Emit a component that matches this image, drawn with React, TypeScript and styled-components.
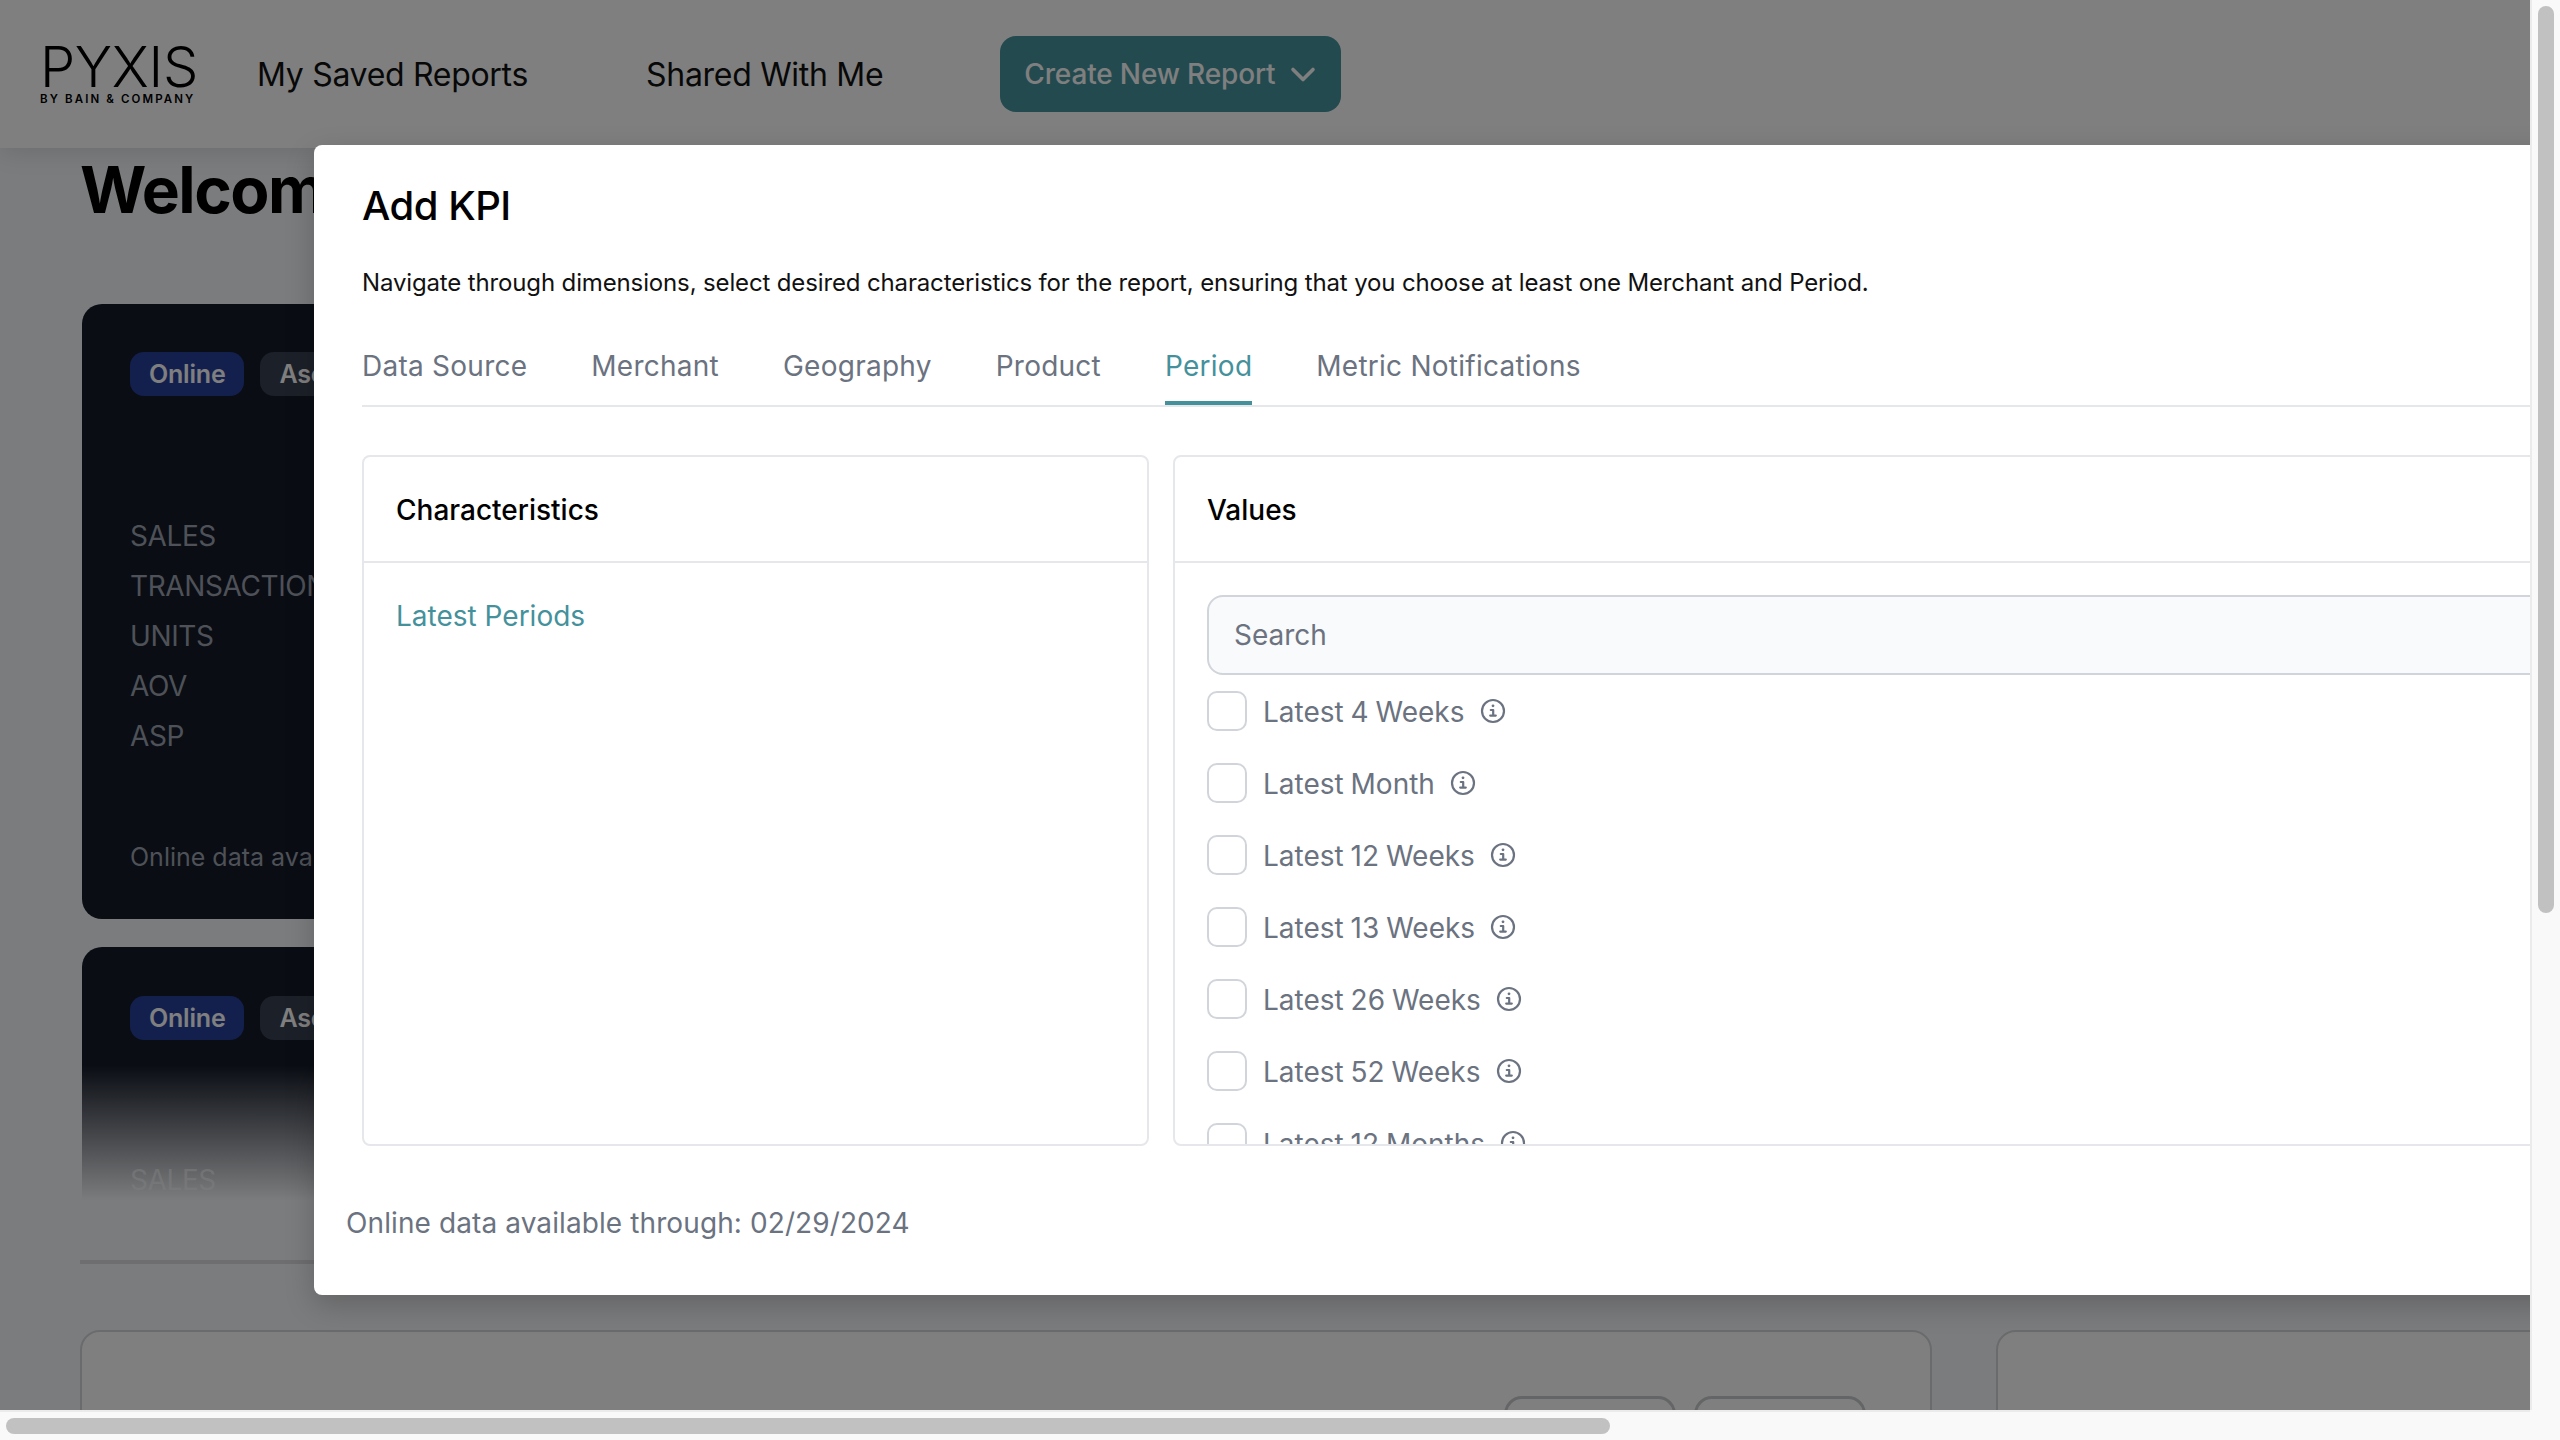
import React from "react";
import styled, { createGlobalStyle } from "styled-components";

const FONT = `Inter, "Noto Sans", sans-serif`;

const tabs = ["Data Source", "Merchant", "Geography", "Product", "Period", "Metric Notifications"];
const periods = [
  "Latest 4 Weeks",
  "Latest Month",
  "Latest 12 Weeks",
  "Latest 13 Weeks",
  "Latest 26 Weeks",
  "Latest 52 Weeks",
  "Latest 12 Months",
];
const metrics = ["SALES", "TRANSACTIONS", "UNITS", "AOV", "ASP"];

const InfoIcon = () => (
  <svg width="28" height="28" viewBox="0 0 28 28" fill="none" stroke="#6b7280" strokeWidth="2.2" strokeLinecap="round" strokeLinejoin="round">
    <circle cx="14" cy="14" r="11" />
    <path d="M14 8.8h.01" strokeWidth="2.8" />
    <path d="M11.8 13h2.4v5.6M11.2 18.6h5.6" />
  </svg>
);

const Chevron = () => (
  <svg width="28" height="28" viewBox="0 0 28 28" fill="none" stroke="#ffffff" strokeWidth="3.6" strokeLinecap="round" strokeLinejoin="round">
    <path d="M4 9.5l10 10 10-10" />
  </svg>
);

const KpiCard = ({ fade }: { fade?: boolean }) => (
  <DarkCard $fade={fade}>
    <Pills>
      <Pill $tone="blue">Online</Pill>
      <Pill $tone="gray">Ascending</Pill>
    </Pills>
    <MetricList>
      {metrics.map((m) => (
        <Metric key={m}>{m}</Metric>
      ))}
    </MetricList>
    <CardNote>Online data available through: 02/29/2024</CardNote>
    {fade && <Fade />}
  </DarkCard>
);

const App = () => {
  return (
    <>
      <Global />
      <Window>
        <Viewport>
          <Page>
            <Header>
              <Logo>
                <LogoMark>PYXIS</LogoMark>
                <LogoSub>BY BAIN &amp; COMPANY</LogoSub>
              </Logo>
              <NavLinks>
                <NavLink>My Saved Reports</NavLink>
                <NavLink>Shared With Me</NavLink>
              </NavLinks>
              <CreateButton>
                Create New Report
                <Chevron />
              </CreateButton>
            </Header>
            <Main>
              <Welcome>Welcome back</Welcome>
              <KpiCard />
              <KpiCard fade />
              <Divider />
              <LowerRow>
                <LowerCard $wide>
                  <LowerHead>
                    <LowerTitle>Dimensional Reports</LowerTitle>
                    <LowerButtons>
                      <LowerButton />
                      <LowerButton />
                    </LowerButtons>
                  </LowerHead>
                </LowerCard>
                <LowerCard>
                  <LowerHead>
                    <LowerTitle>Recently Viewed Reports</LowerTitle>
                  </LowerHead>
                </LowerCard>
              </LowerRow>
            </Main>
          </Page>
          <Backdrop />
          <Modal>
            <ModalTitle>Add KPI</ModalTitle>
            <ModalText>
              Navigate through dimensions, select desired characteristics for the report, ensuring that you choose at least one Merchant and Period.
            </ModalText>
            <TabBar>
              {tabs.map((t) => (
                <Tab key={t} $active={t === "Period"}>
                  {t}
                </Tab>
              ))}
            </TabBar>
            <Panels>
              <Panel>
                <PanelHead>Characteristics</PanelHead>
                <CharList>
                  <CharItem>Latest Periods</CharItem>
                </CharList>
              </Panel>
              <Panel>
                <PanelHead>Values</PanelHead>
                <ValuesBody>
                  <Search>Search</Search>
                  <Options>
                    {periods.map((p) => (
                      <Option key={p}>
                        <Check />
                        <OptionLabel>{p}</OptionLabel>
                        <InfoIcon />
                      </Option>
                    ))}
                  </Options>
                </ValuesBody>
              </Panel>
            </Panels>
            <ModalFoot>Online data available through: 02/29/2024</ModalFoot>
          </Modal>
        </Viewport>
        <VTrack>
          <VThumb />
        </VTrack>
        <HTrack>
          <HThumb />
        </HTrack>
        <Corner />
      </Window>
    </>
  );
};

const Global = createGlobalStyle`
  html, body {
    margin: 0;
    padding: 0;
    overflow: hidden;
    background: #f9f9f9;
    font-family: ${FONT};
  }
  * {
    box-sizing: border-box;
  }
`;

const Window = styled.div`
  display: grid;
  grid-template-columns: 2530px 30px;
  grid-template-rows: 1410px 30px;
  width: 2560px;
  height: 1440px;
`;
const Viewport = styled.div`
  position: relative;
  overflow: hidden;
  background: #f6f8fa;
`;
const Page = styled.div`
  display: flex;
  flex-direction: column;
  width: 3900px;
`;
const Header = styled.header`
  display: flex;
  align-items: center;
  height: 148px;
  padding: 0 40px;
  background: #ffffff;
  box-shadow: 0 4px 24px rgba(0, 0, 0, 0.12);
`;
const Logo = styled.div`
  display: flex;
  flex-direction: column;
  align-items: flex-start;
  width: 157px;
  margin-right: 60px;
  color: #000;
`;
const LogoMark = styled.span`
  font-size: 56px;
  font-weight: 300;
  line-height: 50px;
  letter-spacing: -0.3px;
`;
const LogoSub = styled.span`
  font-size: 11.5px;
  font-weight: 600;
  line-height: 14px;
  letter-spacing: 2.1px;
  white-space: nowrap;
`;
const NavLinks = styled.nav`
  display: flex;
  gap: 118px;
  margin-right: 117px;
`;
const NavLink = styled.a`
  color: #111;
  font-size: 32px;
  font-weight: 400;
  letter-spacing: -0.3px;
  white-space: nowrap;
`;
const CreateButton = styled.button`
  display: flex;
  align-items: center;
  gap: 14px;
  height: 76px;
  padding: 0 24px;
  border: none;
  border-radius: 16px;
  background: #46949f;
  color: #fff;
  font-family: ${FONT};
  font-size: 28px;
  font-weight: 500;
  letter-spacing: -0.15px;
`;
const Main = styled.main`
  display: flex;
  flex-direction: column;
  padding: 0 80px;
`;
const Welcome = styled.h1`
  margin: 2px 0 0;
  height: 154px;
  color: #000;
  font-size: 64px;
  font-weight: 700;
  line-height: 80px;
  letter-spacing: -1.5px;
`;
const DarkCard = styled.section<{ $fade?: boolean }>`
  position: relative;
  display: flex;
  flex-direction: column;
  width: 1800px;
  height: ${(p) => (p.$fade ? "253px" : "615px")};
  margin: ${(p) => (p.$fade ? "28px 0 0 2px" : "0 0 0 2px")};
  padding: ${(p) => (p.$fade ? "49px" : "48px")} 48px 0;
  overflow: hidden;
  border-radius: 20px 20px ${(p) => (p.$fade ? "0 0" : "20px 20px")};
  background: #141a28;
`;
const Pills = styled.div`
  display: flex;
  gap: 16px;
`;
const Pill = styled.span<{ $tone: "blue" | "gray" }>`
  display: flex;
  align-items: center;
  height: 44px;
  padding: 0 19px;
  border-radius: 14px;
  background: ${(p) => (p.$tone === "blue" ? "#26409c" : "#384050")};
  color: #fff;
  font-size: 25px;
  font-weight: 600;
  letter-spacing: -0.2px;
`;
const MetricList = styled.div`
  display: flex;
  flex-direction: column;
  margin-top: 115px;
`;
const Metric = styled.div`
  height: 50px;
  color: #9ca3af;
  font-size: 28px;
  line-height: 50px;
  letter-spacing: -0.4px;
`;
const CardNote = styled.div`
  margin-top: 81px;
  color: #9ca3af;
  font-size: 25px;
  line-height: 30px;
`;
const Fade = styled.div`
  position: absolute;
  left: 0;
  right: 0;
  bottom: 0;
  height: 135px;
  background: linear-gradient(to bottom, rgba(246, 248, 250, 0), #f6f8fa);
`;
const Divider = styled.div`
  width: 2000px;
  height: 4px;
  margin-top: 60px;
  background: #dcdde0;
`;
const LowerRow = styled.div`
  display: flex;
  gap: 64px;
  margin-top: 66px;
`;
const LowerCard = styled.section<{ $wide?: boolean }>`
  width: ${(p) => (p.$wide ? "1852px" : "1000px")};
  height: 300px;
  padding: 64px 64px 0 ${(p) => (p.$wide ? "60px" : "100px")};
  border: 2px solid #d5d7da;
  border-radius: 20px;
  background: #ffffff;
`;
const LowerHead = styled.div`
  display: flex;
  justify-content: space-between;
`;
const LowerTitle = styled.div`
  margin-top: 8px;
  color: #111;
  font-size: 32px;
  font-weight: 600;
  line-height: 40px;
`;
const LowerButtons = styled.div`
  display: flex;
  gap: 18px;
`;
const LowerButton = styled.div`
  width: 172px;
  height: 76px;
  border: 3px solid #c8cacd;
  border-radius: 18px;
`;
const Backdrop = styled.div`
  position: absolute;
  inset: 0;
  background: rgba(0, 0, 0, 0.5);
`;
const Modal = styled.div`
  position: absolute;
  top: 145px;
  left: 314px;
  display: flex;
  flex-direction: column;
  width: 2400px;
  height: 1150px;
  padding: 0 48px;
  border-radius: 8px;
  background: #ffffff;
  box-shadow: 0 10px 30px rgba(0, 0, 0, 0.2);
`;
const ModalTitle = styled.h2`
  margin: 33px 0 0;
  color: #000;
  font-size: 40px;
  font-weight: 500;
  line-height: 56px;
  letter-spacing: -0.5px;
`;
const ModalText = styled.p`
  margin: 33px 0 0;
  color: #111;
  font-size: 24px;
  line-height: 32px;
  letter-spacing: -0.14px;
  white-space: nowrap;
`;
const TabBar = styled.div`
  display: flex;
  gap: 64px;
  height: 73px;
  margin-top: 35px;
  border-bottom: 2px solid #e5e7eb;
`;
const Tab = styled.div<{ $active?: boolean }>`
  padding-top: 12px;
  color: ${(p) => (p.$active ? "#44919c" : "#6b7280")};
  border-bottom: 4px solid ${(p) => (p.$active ? "#44919c" : "transparent")};
  font-size: 28px;
  line-height: 40px;
  letter-spacing: 0.25px;
  white-space: nowrap;
`;
const Panels = styled.div`
  display: grid;
  grid-template-columns: 787px 1500px;
  gap: 24px;
  height: 691px;
  margin-top: 48px;
`;
const Panel = styled.div`
  display: flex;
  flex-direction: column;
  overflow: hidden;
  border: 2px solid #e5e7eb;
  border-radius: 8px;
`;
const PanelHead = styled.div`
  height: 106px;
  flex: none;
  padding: 33px 32px 0;
  border-bottom: 2px solid #e5e7eb;
  color: #000;
  font-size: 28px;
  font-weight: 500;
  line-height: 40px;
`;
const CharList = styled.div`
  padding: 33px 32px;
`;
const CharItem = styled.div`
  color: #44919c;
  font-size: 28px;
  line-height: 40px;
`;
const ValuesBody = styled.div`
  display: flex;
  flex-direction: column;
  padding: 32px 32px 0;
`;
const Search = styled.div`
  height: 80px;
  flex: none;
  padding: 0 25px;
  border: 2px solid #d1d5db;
  border-radius: 16px;
  background: #f9fafb;
  color: #6b7280;
  font-size: 28px;
  line-height: 77px;
`;
const Options = styled.div`
  display: flex;
  flex-direction: column;
  gap: 32px;
  margin-top: 16px;
`;
const Option = styled.div`
  display: flex;
  align-items: center;
  height: 40px;
`;
const Check = styled.span`
  width: 40px;
  height: 40px;
  flex: none;
  border: 2px solid #d1d5db;
  border-radius: 10px;
  background: #fff;
`;
const OptionLabel = styled.span`
  margin: 0 14px 0 16px;
  padding-top: 2px;
  color: #6b7280;
  font-size: 28px;
  word-spacing: -1px;
  white-space: nowrap;
`;
const ModalFoot = styled.div`
  margin: 57px 0 0 -16px;
  color: #6b7280;
  font-size: 28px;
  line-height: 40px;
  letter-spacing: 0.1px;
`;
const VTrack = styled.div`
  padding: 6px 6px 0 6px;
  border-left: 2px solid #ebebeb;
  background: #f9f9f9;
`;
const VThumb = styled.div`
  width: 16px;
  height: 907px;
  border-radius: 8px;
  background: #c1c1c1;
`;
const HTrack = styled.div`
  padding: 6px 0 0 6px;
  border-top: 2px solid #ebebeb;
  background: #f9f9f9;
`;
const HThumb = styled.div`
  width: 1604px;
  height: 16px;
  border-radius: 8px;
  background: #c1c1c1;
`;
const Corner = styled.div`
  background: #f9f9f9;
`;

export default App;
